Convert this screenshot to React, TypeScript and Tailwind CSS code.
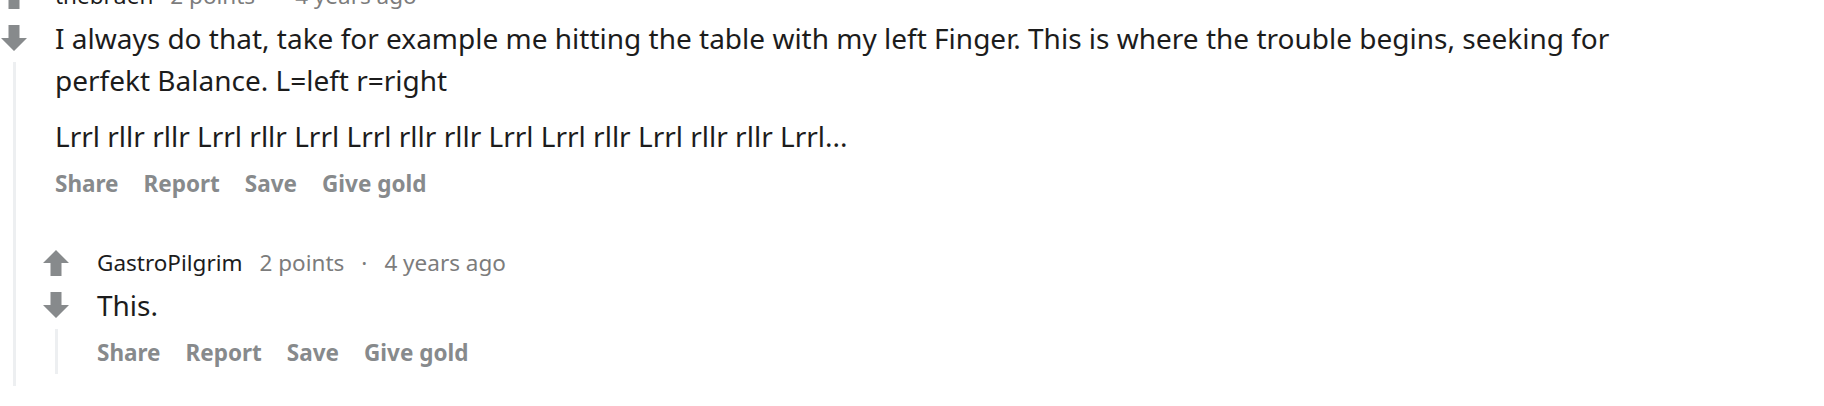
import type { ReactNode } from 'react'

const Arrow = ({ down }: { down?: boolean }) => (
  <svg
    width="26"
    height="26"
    viewBox="0 0 26 26"
    className={down ? 'rotate-180 fill-[#878a8c]' : 'fill-[#878a8c]'}
  >
    <path d="M13 0 L26 13 H18.5 V26 H7.5 V13 H0 Z" />
  </svg>
)

type CommentProps = {
  author: string
  points: string
  age: string
  children: ReactNode
  replies?: ReactNode
}

const Comment = ({ author, points, age, children, replies }: CommentProps) => (
  <div className="flex">
    <div className="flex w-[28px] shrink-0 flex-col items-center pt-[9px]">
      <Arrow />
      <div className="mt-[16px]">
        <Arrow down />
      </div>
      <div className="mt-[11px] w-[3px] flex-1 bg-[#edeff1]" />
    </div>
    <div className="flex-1">
      <div className="pl-[27px]">
        <div className="flex h-[43px] items-center gap-[17px] text-[22.5px] text-[#7c7c7c]">
          <span className="text-[#1c1c1c]">{author}</span>
          <span>{points}</span>
          <span>·</span>
          <span>{age}</span>
        </div>
        <div className="w-[1600px] text-[28px] leading-[42px] text-[#1c1c1c]">{children}</div>
        <div className="mt-[6px] flex h-[42px] items-center gap-[25px] text-[22.5px] font-bold text-[#878a8c]">
          <button>Share</button>
          <button>Report</button>
          <button>Save</button>
          <button>Give gold</button>
        </div>
      </div>
      {replies && <div className="ml-[14px] mt-[36px] pb-[12px]">{replies}</div>}
    </div>
  </div>
)

export default function App() {
  return (
    <div className="h-[406px] w-[1824px] overflow-hidden bg-white font-['Noto_Sans',sans-serif]">
      <div className="-mt-[26px]">
        <Comment
          author="thebruen"
          points="2 points"
          age="4 years ago"
          replies={
            <Comment author="GastroPilgrim" points="2 points" age="4 years ago">
              <p>This.</p>
            </Comment>
          }
        >
          <p>
            I always do that, take for example me hitting the table with my left Finger. This is where
            the trouble begins, seeking for perfekt Balance. L=left r=right
          </p>
          <p className="mt-[14px]">
            Lrrl rllr rllr Lrrl rllr Lrrl Lrrl rllr rllr Lrrl Lrrl rllr Lrrl rllr rllr Lrrl...
          </p>
        </Comment>
      </div>
    </div>
  )
}
